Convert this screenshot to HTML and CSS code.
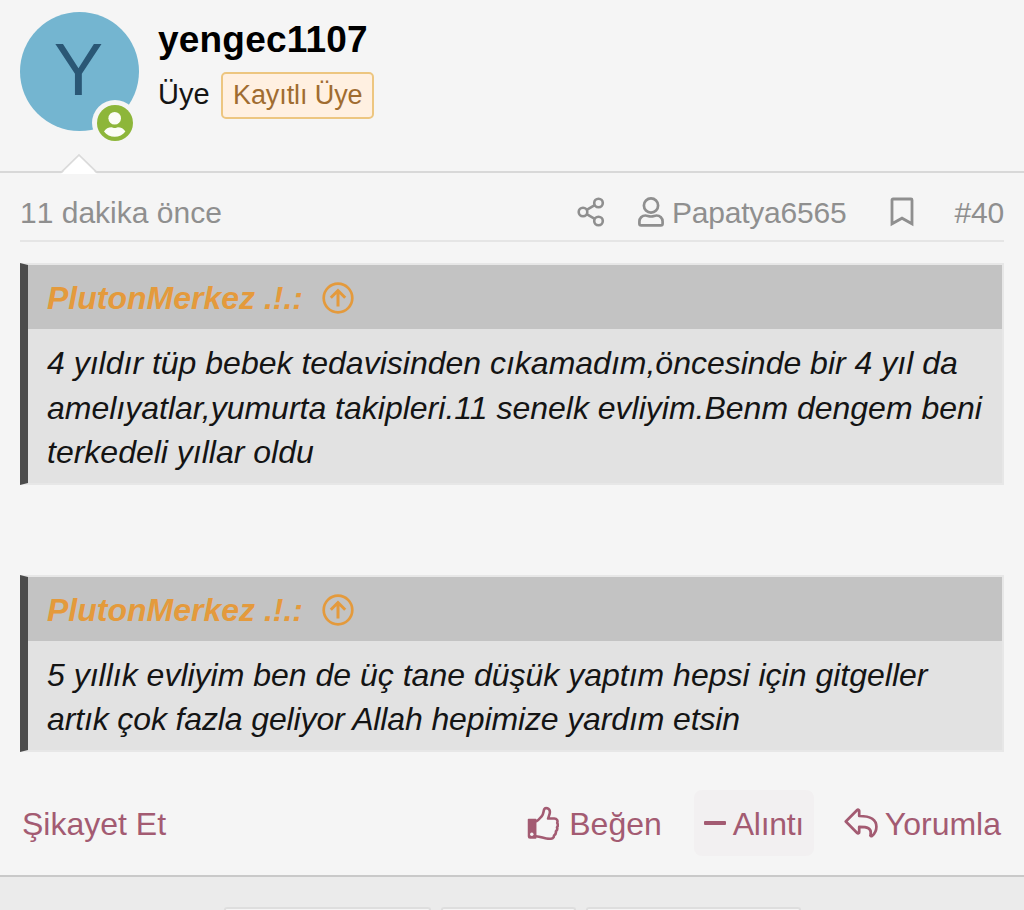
FILE: index.html
```html
<!DOCTYPE html>
<html lang="tr">
<head>
  <meta charset="UTF-8">
  <meta name="viewport" content="width=device-width, initial-scale=1.0">
  <title>yengec1107 - #40</title>
  <link rel="stylesheet" href="styles.css">
</head>
<body>
  <article class="message">
    <header class="message-user">
      <div class="avatar">
        <span class="avatar-letter">Y</span>
        <svg class="online" viewBox="0 0 46 46">
          <circle cx="23" cy="23" r="23" fill="#f5f5f5"/>
          <circle cx="23" cy="23" r="18" fill="#8db63a"/>
          <circle cx="22.7" cy="18.2" r="6.3" fill="#fbfdf6"/>
          <path d="M12 31.5c1.500-2.800 4.500-4.300 7.500-4.300 1.200 0 2 .8 3.200.8s2-.8 3.200-.8c3 0 6 1.500 7.500 4.300-2.500 3.500-6.500 5.300-10.700 5.300S14.500 35 12 31.500z" fill="#fbfdf6"/>
        </svg>
      </div>
      <div class="user-details">
        <h4 class="username">yengec1107</h4>
        <div class="user-line">
          <span class="user-title">Üye</span>
          <span class="user-banner">Kayıtlı Üye</span>
        </div>
      </div>
      <svg class="arrow" viewBox="0 0 36 20">
        <path d="M0 20L18 2l18 18z" fill="#fff"/>
        <path d="M0 18.500L18 1l18 17.500" fill="none" stroke="#dadada" stroke-width="1.700"/>
      </svg>
    </header>

    <div class="message-main">
      <div class="attribution">
        <time>11 dakika önce</time>
        <div class="attribution-right">
          <svg class="icon-share" viewBox="0 0 28 30" fill="none" stroke="currentColor" stroke-width="2.600">
            <circle cx="6" cy="15" r="4.300"/>
            <circle cx="21.500" cy="6" r="4.300"/>
            <circle cx="21.500" cy="24" r="4.300"/>
            <path d="M9.700 12.800l8-4.600M9.700 17.200l8 4.600"/>
          </svg>
          <span class="op">
            <svg class="icon-user" viewBox="0 0 26 30" fill="none" stroke="currentColor" stroke-width="2.700">
              <circle cx="13" cy="8.500" r="7.100"/>
              <path d="M7.500 18.500c2 0 2.800 1 5.500 1s3.500-1 5.500-1c3.500 0 6.100 2.700 6.100 6v2.200c0 1-.7 1.700-1.700 1.700H3.100c-1 0-1.700-.7-1.700-1.700v-2.200c0-3.300 2.600-6 6.100-6z"/>
            </svg>
            <span class="op-name">Papatya6565</span>
          </span>
          <svg class="icon-bookmark" viewBox="0 0 24 30" fill="none" stroke="currentColor" stroke-width="2.800">
            <path d="M2 26.800V3c0-.6.400-1 1-1h18c.600 0 1 .4 1 1v23.800l-10-5.600z"/>
          </svg>
          <span class="post-number">#40</span>
        </div>
      </div>

      <blockquote class="quote">
        <div class="quote-title">
          <span>PlutonMerkez .!.:</span>
          <svg viewBox="0 0 32 32" fill="none" stroke="currentColor" stroke-width="2.700">
            <circle cx="16" cy="16" r="14.300"/>
            <path d="M16 24.500V9.500M8.800 15.700L16 8.500l7.200 7.200" stroke-width="3"/>
          </svg>
        </div>
        <p class="quote-content">4 yıldır tüp bebek tedavisinden cıkamadım,öncesinde bir 4 yıl da<br>amelıyatlar,yumurta takipleri.11 senelk evliyim.Benm dengem beni<br>terkedeli yıllar oldu</p>
      </blockquote>

      <blockquote class="quote">
        <div class="quote-title">
          <span>PlutonMerkez .!.:</span>
          <svg viewBox="0 0 32 32" fill="none" stroke="currentColor" stroke-width="2.700">
            <circle cx="16" cy="16" r="14.300"/>
            <path d="M16 24.500V9.500M8.800 15.700L16 8.500l7.200 7.200" stroke-width="3"/>
          </svg>
        </div>
        <p class="quote-content">5 yıllık evliyim ben de üç tane düşük yaptım hepsi için gitgeller<br><span class="tight">artık çok fazla geliyor Allah hepimize yardım etsin</span></p>
      </blockquote>

      <footer class="actions">
        <a class="report">Şikayet Et</a>
        <a class="action like">
          <svg viewBox="0 0 32 34" fill="none" stroke="currentColor" stroke-width="2.600" stroke-linejoin="round">
            <path d="M1.500 13.500h7.200v18.500H3c-.8 0-1.500-.7-1.500-1.500z" fill="currentColor" stroke-width="1.500"/>
            <circle cx="4.800" cy="28.200" r="1.700" fill="#f5f5f5" stroke="none"/>
            <path d="M9 15.500c2.500-1 4-3.500 6-5.700 1.500-1.700 1.300-4.500 2.200-6.500 1-2.200 5.500-1.300 5.700 2.500.1 2.300-1.100 4.200-1.800 6.700h6.200c2.600 0 3.800 2.200 2.900 4.500 1 1.500.9 3-.2 4.300.6 1.600.2 3-1.100 4 .3 1.700-.4 3.200-1.900 4.200.2 2.500-2 3.300-4.500 3.300-5.500 0-8-2.300-13.500-2.600"/>
          </svg>
          <span>Beğen</span>
        </a>
        <a class="action selected">
          <i class="minus"></i>
          <span>Alıntı</span>
        </a>
        <a class="action reply">
          <svg viewBox="0 0 34 32" fill="none" stroke="currentColor" stroke-width="2.700" stroke-linejoin="round">
            <path d="M1.800 14.500L13.200 3c.7-.7 2-.3 2 .8V9c9 0 17.200 1.700 17.200 10.800 0 3.500-1.800 7.100-4.400 9.200-.8.600-1.900-.2-1.600-1.200 1.800-7-3.500-7.900-11.200-7.900v5.300c0 1.100-1.300 1.500-2 .8z"/>
          </svg>
          <span>Yorumla</span>
        </a>
      </footer>
    </div>
  </article>

  <div class="page-nav">
    <span class="nav-item first"></span>
    <span class="nav-item current"></span>
    <span class="nav-item last"></span>
  </div>
</body>
</html>
```
FILE: styles.css
```css
* {
  margin: 0;
  padding: 0;
  box-sizing: border-box;
}

body {
  background: #ebebeb;
  color: #141414;
  font-family: "Liberation Sans", Arial, sans-serif;
  font-size: 32px;
  line-height: 36px;
  white-space: nowrap;
}

svg {
  display: block;
  flex: none;
}

.message {
  height: 877px;
  background: #f5f5f5;
  border-bottom: 2px solid #c9c9c9;
}

.message-user {
  position: relative;
  display: flex;
  height: 173px;
  padding: 12px 20px;
  border-bottom: 2px solid #d8d8d8;
}

.avatar {
  position: relative;
  width: 119px;
  height: 119px;
  margin-right: 19px;
  border-radius: 50%;
  background: #74b5d0;
  color: #2a5775;
  text-align: center;
}

.avatar-letter {
  display: block;
  padding-right: 2px;
  font-size: 74px;
  line-height: 115px;
}

.online {
  position: absolute;
  left: 72px;
  top: 88px;
  width: 46px;
  height: 46px;
}

.arrow {
  position: absolute;
  left: 61px;
  top: 154px;
  width: 36px;
  height: 20px;
}

.username {
  margin-top: 8px;
  color: #000;
  font-size: 37px;
  line-height: 40px;
  letter-spacing: 0.2px;
}

.user-line {
  display: flex;
  align-items: center;
  margin-top: 12px;
}

.user-title {
  width: 63px;
  padding-bottom: 3px;
  font-size: 29px;
}

.user-banner {
  height: 47px;
  padding: 0 10px;
  background: #fff0e1;
  border: 2px solid #edc680;
  border-radius: 5px;
  color: #a06c30;
  font-size: 27px;
  line-height: 43px;
  letter-spacing: -0.1px;
}

.message-main {
  padding: 0 20px;
}

.attribution {
  display: flex;
  justify-content: space-between;
  align-items: center;
  height: 69px;
  padding-top: 11px;
  border-bottom: 2px solid #e5e5e5;
  color: #8f8f8f;
  font-size: 30px;
}

.attribution time {
  margin-top: 1px;
  font-kerning: none;
}

.attribution-right,
.op {
  display: flex;
  align-items: center;
}

.op-name,
.post-number {
  padding-top: 2px;
  letter-spacing: -0.2px;
}

.icon-share {
  width: 28px;
  height: 30px;
  margin-right: 33px;
}

.icon-user {
  width: 26px;
  height: 30px;
  margin-right: 8px;
}

.icon-bookmark {
  width: 24px;
  height: 30px;
  margin: 0 41px 0 43px;
}

.quote {
  margin-top: 21px;
  background: #e2e2e2;
  border: 2px solid #e7e7e7;
  border-left: 8px solid #4c4c4c;
  font-style: italic;
}

.quote + .quote {
  margin-top: 90px;
}

.quote-title {
  display: flex;
  align-items: center;
  height: 64px;
  padding: 2px 0 0 19px;
  background: #c3c3c3;
  color: #e49a3c;
  font-weight: bold;
}

.quote-title svg {
  width: 32px;
  height: 32px;
  margin-left: 19px;
}

.quote-content {
  padding: 12px 0 8px 19px;
  line-height: 44.5px;
}

.tight {
  letter-spacing: -0.13px;
}

.actions {
  display: flex;
  align-items: center;
  height: 66px;
  margin-top: 38px;
  color: #a35b72;
}

.actions span,
.report {
  padding-top: 2px;
}

.report {
  margin: 0 auto 0 2px;
}

.action {
  display: flex;
  align-items: center;
  height: 66px;
}

.like svg {
  width: 32px;
  height: 34px;
  margin-right: 10px;
}

.selected {
  width: 120px;
  margin: 0 30px 0 32px;
  padding-left: 10px;
  background: #f2f0f1;
  border-radius: 8px;
  letter-spacing: -0.3px;
}

.minus {
  width: 22px;
  height: 4px;
  margin-right: 7px;
  border-radius: 1px;
  background: #a35b72;
}

.reply svg {
  width: 34px;
  height: 32px;
  margin-right: 7px;
}

.reply {
  padding-right: 3px;
}

.page-nav {
  display: flex;
  justify-content: center;
  gap: 10px;
  height: 33px;
  padding-top: 30px;
  overflow: hidden;
}

.nav-item {
  height: 3px;
  border: 2px solid #dedede;
  border-bottom: 0;
  border-radius: 6px 6px 0 0;
  background: #f5f5f5;
}

.first {
  width: 207px;
}

.current {
  width: 135px;
}

.last {
  width: 215px;
}
```
